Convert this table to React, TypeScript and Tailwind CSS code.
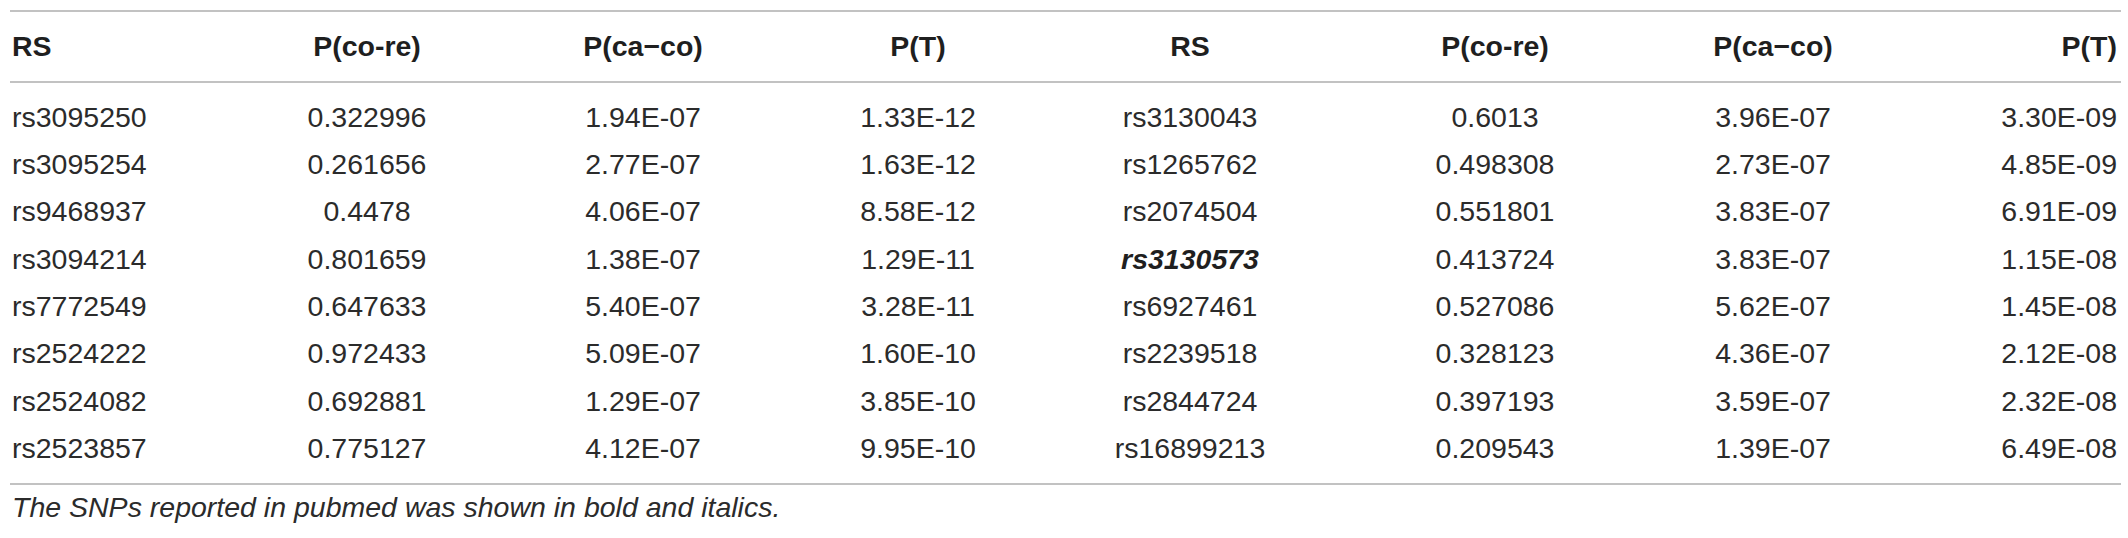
import React from "react";

type Row = [string, string, string, string, string, string, string, string];

const rows: Row[] = [
  ["rs3095250", "0.322996", "1.94E-07", "1.33E-12", "rs3130043", "0.6013", "3.96E-07", "3.30E-09"],
  ["rs3095254", "0.261656", "2.77E-07", "1.63E-12", "rs1265762", "0.498308", "2.73E-07", "4.85E-09"],
  ["rs9468937", "0.4478", "4.06E-07", "8.58E-12", "rs2074504", "0.551801", "3.83E-07", "6.91E-09"],
  ["rs3094214", "0.801659", "1.38E-07", "1.29E-11", "rs3130573", "0.413724", "3.83E-07", "1.15E-08"],
  ["rs7772549", "0.647633", "5.40E-07", "3.28E-11", "rs6927461", "0.527086", "5.62E-07", "1.45E-08"],
  ["rs2524222", "0.972433", "5.09E-07", "1.60E-10", "rs2239518", "0.328123", "4.36E-07", "2.12E-08"],
  ["rs2524082", "0.692881", "1.29E-07", "3.85E-10", "rs2844724", "0.397193", "3.59E-07", "2.32E-08"],
  ["rs2523857", "0.775127", "4.12E-07", "9.95E-10", "rs16899213", "0.209543", "1.39E-07", "6.49E-08"],
];

const headers = ["RS", "P(co-re)", "P(ca\u2212co)", "P(T)", "RS", "P(co-re)", "P(ca\u2212co)", "P(T)"];

// reported SNP, shown in bold italics
const reported = "rs3130573";

const grid = "grid grid-cols-[220px_274px_278px_272px_272px_338px_218px_1fr] items-center";

function cellAlign(i: number) {
  if (i === 0) return "text-left pl-[2px]";
  if (i === 7) return "text-right pr-[4px]";
  return "text-center";
}

export default function App() {
  return (
    <div
      className="w-[2128px] h-[538px] bg-white text-[#2b2b2b] text-[28.5px] leading-none pt-[10px] pl-[10px] pr-[7px]"
      style={{ fontFamily: '"Liberation Sans", Arial, sans-serif' }}
    >
      <div className="h-[2px] bg-[#c2c2c2]" />

      {/* Header */}
      <div className={`${grid} h-[69px] font-bold text-[#1f1f1f]`}>
        {headers.map((h, i) => (
          <div key={i} className={cellAlign(i)}>
            {h}
          </div>
        ))}
      </div>

      <div className="h-[2px] bg-[#c2c2c2]" />

      {/* Body */}
      <div className="pt-[10.5px] pb-[11px]">
        {rows.map((r) => (
          <div key={r[0]} className={`${grid} h-[47.3px]`}>
            {r.map((v, i) => (
              <div
                key={i}
                className={`${cellAlign(i)} ${v === reported ? "font-bold italic text-[#1f1f1f]" : ""}`}
              >
                {v}
              </div>
            ))}
          </div>
        ))}
      </div>

      <div className="h-[2px] bg-[#c2c2c2]" />

      <p className="italic h-[44px] flex items-center pl-[2px]">
        The SNPs reported in pubmed was shown in bold and italics.
      </p>
    </div>
  );
}
